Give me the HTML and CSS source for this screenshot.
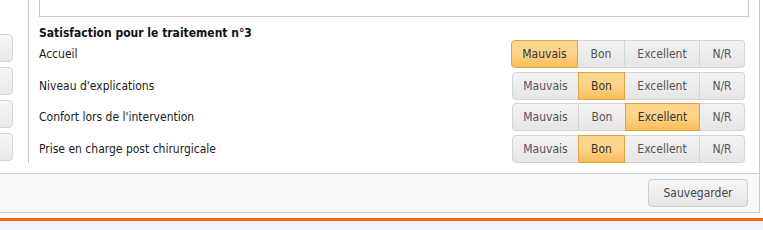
FILE: index.html
```html
<!DOCTYPE html>
<html lang="fr">

<head>
  <meta charset="UTF-8">
  <meta name="viewport" content="width=device-width, initial-scale=1.0">
  <title>Satisfaction</title>
  <link rel="stylesheet" href="styles.css">
</head>

<body>
  <div class="page">
    <div class="content">
      <!--colonne gauche (boutons coupés)-->
      <div class="side">
        <div class="side-btn"></div>
        <div class="side-btn"></div>
        <div class="side-btn"></div>
        <div class="side-btn"></div>
      </div>

      <div class="main">
        <div class="notes"></div>
        <h3 class="title">Satisfaction pour le traitement n°3</h3>

        <div class="row first">
          <label>Accueil</label>
          <div class="choices">
            <span class="choice active">Mauvais</span>
            <span class="choice">Bon</span>
            <span class="choice">Excellent</span>
            <span class="choice">N/R</span>
          </div>
        </div>
        <div class="row">
          <label>Niveau d'explications</label>
          <div class="choices">
            <span class="choice">Mauvais</span>
            <span class="choice active">Bon</span>
            <span class="choice">Excellent</span>
            <span class="choice">N/R</span>
          </div>
        </div>
        <div class="row">
          <label>Confort lors de l'intervention</label>
          <div class="choices">
            <span class="choice">Mauvais</span>
            <span class="choice">Bon</span>
            <span class="choice active">Excellent</span>
            <span class="choice">N/R</span>
          </div>
        </div>
        <div class="row">
          <label>Prise en charge post chirurgicale</label>
          <div class="choices">
            <span class="choice">Mauvais</span>
            <span class="choice active">Bon</span>
            <span class="choice">Excellent</span>
            <span class="choice">N/R</span>
          </div>
        </div>
      </div>
    </div>

    <div class="footer">
      <button class="save">Sauvegarder</button>
    </div>
  </div>
  <div class="bar"></div>
</body>

</html>
```

FILE: styles.css
```css
body {
  margin: 0;
  font-family: "DejaVu Sans Condensed", "DejaVu Sans", sans-serif;
  font-size: 12px;
  color: #1a1a1a;
  background: #fff;
  overflow: hidden;
}

.page {
  width: 759px;
  border-right: 1px solid #ccc;
}

.content {
  display: flex;
  height: 173px;
}

/*colonne gauche*/
.side {
  width: 29px;
  height: 163px;
  border-right: 1px solid #ccc;
  overflow: hidden;
  padding-top: 34px;
  box-sizing: border-box;
}

.side-btn {
  width: 40px;
  height: 28px;
  margin-left: -27px;
  margin-bottom: 5px;
  border: 1px solid #d6d6d6;
  border-radius: 4px;
  box-sizing: border-box;
  background: linear-gradient(#f7f7f7, #e8e8e8);
}

/*zone principale*/
.main {
  flex: 1;
  padding: 0 10px 0 10px;
}

.notes {
  height: 30px;
  margin-top: -13px;
  border: 1px solid #ccc;
  box-sizing: border-box;
}

.title {
  margin: 10px 0 0;
  font-size: 12px;
  font-weight: bold;
  color: #111;
  line-height: 13px;
}

.row {
  display: flex;
  justify-content: space-between;
  align-items: center;
  padding-right: 4px;
  margin-top: 3.6px;
}

.row.first {
  margin-top: 0;
}

.choices {
  display: flex;
  height: 28px;
}

.choice {
  display: flex;
  align-items: center;
  justify-content: center;
  box-sizing: border-box;
  height: 28px;
  border: 1px solid #d4d4d4;
  border-left: none;
  background: linear-gradient(#f2f2f2, #e6e6e6);
  color: #555;
}

.choice:nth-child(1) {
  width: 67px;
  border-left: 1px solid #d4d4d4;
  border-radius: 4px 0 0 4px;
}

.choice:nth-child(2) {
  width: 47px;
}

.choice:nth-child(3) {
  width: 75px;
}

.choice:nth-child(4) {
  width: 45px;
  border-radius: 0 4px 4px 0;
}

.choice.active {
  background: linear-gradient(#fdd48c 0%, #fdd48c 45%, #fbbd59 100%);
  border-color: #e0a448;
  color: #333;
}

.choice.active:nth-child(n+2) {
  border-left: 1px solid #e0a448;
  margin-left: -1px;
}

/*pied*/
.footer {
  height: 40px;
  border-top: 1px solid #ccc;
  border-bottom: 1px solid #ccc;
  box-sizing: border-box;
  background: #f9f9f9;
  display: flex;
  justify-content: flex-end;
  align-items: center;
  padding-right: 11px;
}

.save {
  width: 100px;
  height: 28px;
  border: 1px solid #ccc;
  border-radius: 4px;
  background: linear-gradient(#f6f6f6, #e5e5e5);
  font-family: inherit;
  font-size: 12px;
  color: #444;
}

.bar {
  margin-top: 5px;
  height: 3px;
  background: #ff6600;
  border-bottom: 10px solid #eef4fa;
}
```
